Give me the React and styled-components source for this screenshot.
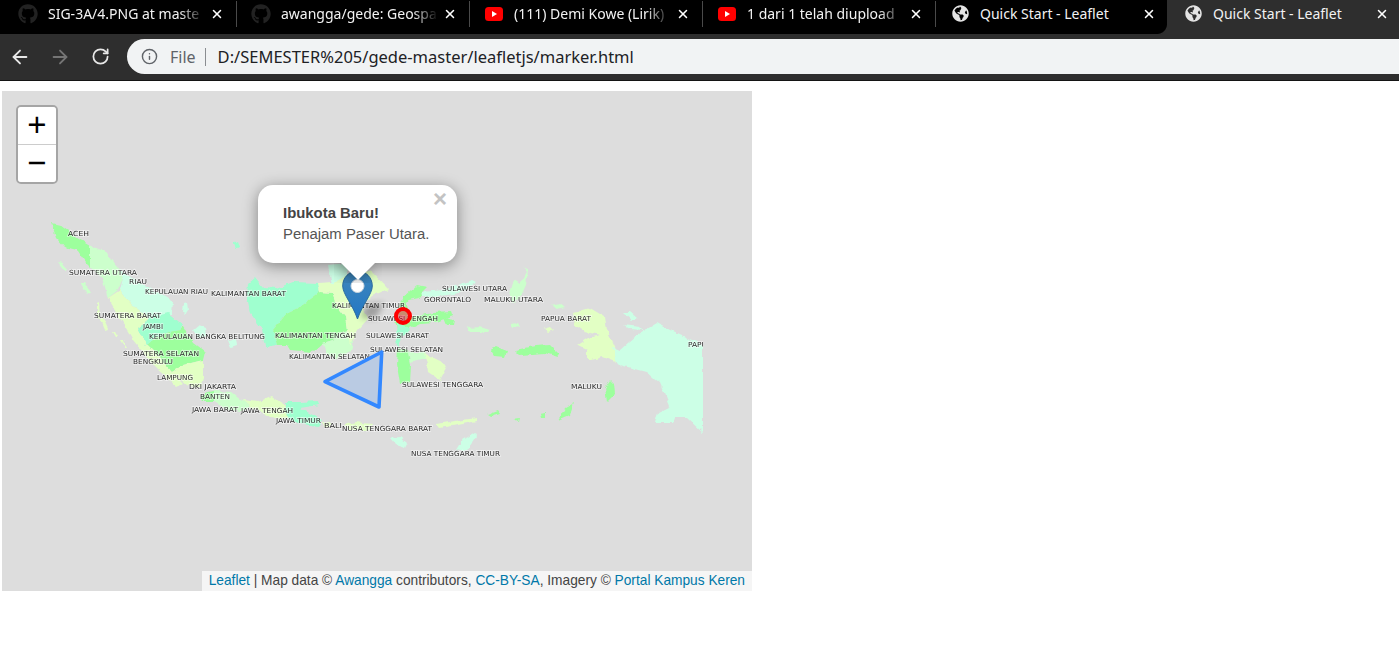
import React from 'react'
import styled, { createGlobalStyle } from 'styled-components'
import { FaGithub, FaGlobeAmericas } from 'react-icons/fa'
import { ArrowLeft, ArrowRight, Info, RotateCw, X } from 'lucide-react'

const BRIGHT = '#9dff9d'
const MINT = '#9fffcf'
const PALE_MINT = '#ccffe6'
const PALE_GREEN = '#ccffcc'
const PALE_YELLOW = '#e2ffc4'

const tabs = [
  { title: 'SIG-3A/4.PNG at maste', icon: 'github', fade: true },
  { title: 'awangga/gede: Geospa', icon: 'github', fade: true },
  { title: '(111) Demi Kowe (Lirik)', icon: 'youtube', fade: true },
  { title: '1 dari 1 telah diupload', icon: 'youtube', fade: true },
  { title: 'Quick Start - Leaflet', icon: 'globe' },
  { title: 'Quick Start - Leaflet', icon: 'globe', active: true },
]

// page coordinates, the svg viewBox starts at the corner of the map
const land = [
  [BRIGHT, '52,223 60,225 73,235 90,245 90,255 90,267 85,262 77,250 65,247 57,238'],
  [PALE_GREEN, '90,245 107,253 120,270 123,278 118,290 108,298 102,278 90,267'],
  [PALE_MINT, '120,270 137,280 153,290 173,302 172,315 150,318 132,305 120,290 123,278'],
  [PALE_YELLOW, '108,298 120,290 132,305 150,318 137,328 147,345 160,358 172,372 183,384 177,387 155,367 133,340 120,318'],
  [MINT, '137,328 150,318 168,313 183,325 180,330 168,332 155,338 147,345'],
  [BRIGHT, '147,345 155,338 168,332 180,330 183,327 193,343 205,352 203,360 183,365 172,372 160,358'],
  [PALE_YELLOW, '183,365 203,360 203,378 200,388 187,385 172,372'],
  [PALE_MINT, '193,330 199,325 206,328 207,337 198,338'],
  [PALE_MINT, '228,340 236,338 237,346 231,348'],
  [PALE_GREEN, '58,262 62,263 68,270 64,270'],
  [PALE_GREEN, '80,282 84,282 90,292 87,294'],
  [PALE_YELLOW, '97,303 99,302 100,318 97,317'],
  [PALE_YELLOW, '100,318 103,318 108,329 105,330'],
  [PALE_YELLOW, '113,332 115,332 118,337 116,337'],
  [PALE_YELLOW, '120,340 122,340 127,348 125,348'],
  [PALE_MINT, '183,303 187,302 188,310 185,315 182,312'],
  [MINT, '233,243 237,241 239,247 235,249'],
  [MINT, '248,283 255,277 263,287 277,288 293,282 318,283 320,292 300,307 287,313 273,330 277,345 265,347 262,330 250,313 247,297'],
  [BRIGHT, '320,292 332,293 337,307 345,317 347,330 333,340 323,343 313,352 290,350 287,345 277,345 273,330 287,313 300,307'],
  [PALE_GREEN, '323,343 333,340 347,330 353,343 350,353 337,358 327,355'],
  [PALE_YELLOW, '318,283 332,282 345,275 370,270 388,289 372,296 362,305 367,320 358,330 350,345 347,330 345,317 337,307 332,293 320,292'],
  [PALE_MINT, '328,265 347,263 347,275 332,284'],
  [BRIGHT, '200,397 207,392 214,391 214,402 203,402'],
  [PALE_GREEN, '214,391 232,392 242,400 250,407 240,412 225,408 214,402'],
  [PALE_YELLOW, '242,400 258,402 272,396 280,402 290,408 287,418 270,417 250,407'],
  [MINT, '285,402 300,402 318,401 319,405 300,408 322,420 318,426 300,424 287,418'],
  [PALE_YELLOW, '323,422 330,423 330,427 324,427'],
  [PALE_YELLOW, '345,425 355,422 372,424 370,430 350,430'],
  [PALE_YELLOW, '437,424 455,421 477,418 477,421 458,425 440,428'],
  [PALE_MINT, '390,438 400,437 407,443 405,447 395,444'],
  [PALE_MINT, '456,450 462,440 475,432 477,436 470,447 462,452'],
  [PALE_MINT, '422,292 443,290 473,280 477,282 460,293 433,297 423,297'],
  [BRIGHT, '403,297 417,285 427,287 422,292 423,297 410,300 403,303'],
  [BRIGHT, '402,298 407,305 410,317 433,313 452,312 453,315 437,322 420,323 410,328 397,330 395,317'],
  [BRIGHT, '443,318 455,320 454,325 446,325'],
  [MINT, '397,322 408,327 410,330 402,337 397,347 396,335'],
  [BRIGHT, '398,347 408,350 410,365 409,383 400,383 397,365'],
  [PALE_GREEN, '408,352 424,352 426,358 410,362'],
  [PALE_YELLOW, '423,353 437,360 448,365 440,380 428,372 427,363'],
  [PALE_GREEN, '467,328 480,327 490,330 488,332 470,332'],
  [PALE_GREEN, '510,295 514,280 520,284 527,272 523,267 528,270 526,285 520,298 512,302'],
  [PALE_GREEN, '510,323 518,322 520,326 512,327'],
  [BRIGHT, '490,350 497,347 507,351 505,357 494,356'],
  [BRIGHT, '515,350 535,346 550,345 557,352 558,357 545,353 520,355'],
  [BRIGHT, '605,388 610,380 614,384 615,394 607,402'],
  [BRIGHT, '558,420 565,408 574,403 570,415'],
  [BRIGHT, '540,414 545,413 545,418 541,418'],
  [BRIGHT, '487,415 498,411 500,414 490,417'],
  [BRIGHT, '513,419 520,418 519,422'],
  [PALE_YELLOW, '573,313 590,308 605,317 607,330 612,340 620,357 615,362 602,357 592,360 587,360 587,350 577,345 588,338 600,335 585,332 575,325'],
  [PALE_MINT, '613,347 620,350 637,335 657,323 670,330 703,345 703,433 687,418 675,418 673,423 655,423 658,413 670,407 660,383 647,372 620,365 617,362'],
  [PALE_MINT, '623,312 630,312 637,318 632,320'],
  [PALE_MINT, '623,325 640,327 643,330 630,329'],
  [PALE_YELLOW, '543,329 550,327 553,330 547,332'],
  [PALE_GREEN, '550,305 560,303 565,307 556,309'],
]

const labels = [
  ['ACEH', 68, 234, 21],
  ['SUMATERA UTARA', 69, 273, 68],
  ['RIAU', 129, 282, 18],
  ['KEPULAUAN RIAU', 145, 292, 63],
  ['KALIMANTAN BARAT', 211, 294, 75],
  ['SUMATERA BARAT', 94, 316, 67],
  ['JAMBI', 143, 327, 20],
  ['KEPULAUAN BANGKA BELITUNG', 149, 337, 116],
  ['KALIMANTAN TENGAH', 275, 336, 81],
  ['SUMATERA SELATAN', 123, 354, 76],
  ['BENGKULU', 133, 362, 40],
  ['LAMPUNG', 157, 378, 36],
  ['DKI JAKARTA', 189, 387, 47],
  ['BANTEN', 200, 397, 30],
  ['JAWA BARAT', 192, 410, 46],
  ['JAWA TENGAH', 241, 411, 52],
  ['JAWA TIMUR', 276, 421, 45],
  ['BALI', 324, 426, 18],
  ['NUSA TENGGARA BARAT', 342, 429, 90],
  ['NUSA TENGGARA TIMUR', 411, 454, 89],
  ['KALIMANTAN SELATAN', 289, 357, 81],
  ['KALIMANTAN TIMUR', 332, 306, 73],
  ['SULAWESI TENGAH', 368, 319, 70],
  ['SULAWESI BARAT', 366, 336, 63],
  ['SULAWESI SELATAN', 370, 350, 73],
  ['SULAWESI TENGGARA', 402, 385, 81],
  ['SULAWESI UTARA', 442, 289, 65],
  ['GORONTALO', 424, 300, 47],
  ['MALUKU UTARA', 484, 300, 59],
  ['PAPUA BARAT', 541, 319, 50],
  ['MALUKU', 571, 387, 31],
  ['PAPUA', 688, 345, 24],
]

const GlobalStyle = createGlobalStyle`
  html, body {
    margin: 0;
    padding: 0;
    background: #fff;
    overflow: hidden;
  }
`

const Window = styled.div`
  width: 1399px;
  height: 665px;
  overflow: hidden;
  display: flex;
  flex-direction: column;
  font-family: "Noto Sans", "Open Sans", sans-serif;
`

const TabStrip = styled.div`
  display: flex;
  height: 34px;
  padding-left: 2px;
  background: #000;
`

const Tab = styled.div`
  position: relative;
  flex: 0 0 233px;
  min-width: 0;
  box-sizing: border-box;
  display: flex;
  align-items: center;
  padding: 0 11px 7px 17px;
  background: ${(p) => (p.$active ? '#2e2e2e' : 'transparent')};
  color: #f2f2f2;

  &::before {
    content: '';
    display: ${(p) => (p.$active ? 'block' : 'none')};
    position: absolute;
    left: -10px;
    bottom: 0;
    width: 10px;
    height: 10px;
    background: radial-gradient(circle at 0 0, #000 9.5px, #2e2e2e 10.5px);
  }

  &::after {
    content: '';
    display: ${(p) => (p.$divider ? 'block' : 'none')};
    position: absolute;
    right: -2px;
    top: 1px;
    bottom: 7px;
    width: 1px;
    background: #4a4a4a;
  }
`

const TabIcon = styled.span`
  flex: 0 0 18px;
  min-width: 0;
  height: 18px;
  margin-right: 11px;
  display: flex;
  align-items: center;
  justify-content: center;
  color: ${(p) => p.$color};

  svg {
    flex-shrink: 0;
  }
`

const TabTitle = styled.span`
  flex: 1;
  min-width: 0;
  font-size: 14px;
  white-space: nowrap;
  mask-image: ${(p) => (p.$fade ? 'linear-gradient(to right, #000 84%, transparent 100%)' : 'none')};
`

const TabClose = styled.span`
  flex: 0 0 14px;
  margin-left: 5px;
  display: flex;
  color: #fff;
`

const Toolbar = styled.div`
  display: flex;
  align-items: flex-start;
  height: 41px;
  padding-top: 5px;
  background: #2e2e2e;
  border-bottom: 1px solid #141414;
`

const NavButton = styled.span`
  flex: 0 0 40px;
  height: 35px;
  display: flex;
  align-items: center;
  justify-content: center;
  color: ${(p) => (p.$disabled ? '#757575' : '#e8e8e8')};
`

const AddressBar = styled.div`
  flex: 1;
  height: 35px;
  margin-left: 7px;
  padding-left: 14px;
  display: flex;
  align-items: center;
  background: #f1f3f4;
  border-radius: 18px 0 0 18px;
`

const SiteInfo = styled.span`
  display: flex;
  align-items: center;
  gap: 12px;
  padding-right: 9px;
  margin-right: 12px;
  color: #5f6368;
  font-size: 16px;
  border-right: 1px solid #8a8d91;
  line-height: 18px;
`

const Url = styled.span`
  color: #202124;
  font-size: 16.5px;
`

const Page = styled.div`
  flex: 1;
  background: #fff;
  padding: 10px 2px;
`

const MapFrame = styled.div`
  position: relative;
  width: 750px;
  height: 500px;
  background: #ddd;
  overflow: hidden;
  font-family: "Liberation Sans", Arial, sans-serif;
`

const MapDrawing = styled.svg`
  display: block;
  width: 750px;
  height: 500px;
`

const LabelText = styled.text`
  font-family: "DejaVu Sans", sans-serif;
  font-size: 7px;
  fill: #2a2a2a;
  stroke: rgba(255, 255, 255, 0.5);
  stroke-width: 1.6px;
  paint-order: stroke;
  dominant-baseline: central;
`

const ZoomBox = styled.div`
  position: absolute;
  left: 14px;
  top: 14px;
  width: 38px;
  border: 2px solid rgba(0, 0, 0, 0.25);
  border-radius: 5px;
  background-clip: padding-box;
  overflow: hidden;
`

const ZoomButton = styled.div`
  box-sizing: border-box;
  height: 37px;
  padding-top: 4px;
  display: flex;
  align-items: center;
  justify-content: center;
  background: #fff;
  color: #000;
  font: 33px "Liberation Mono", monospace;
  & + & {
    height: 38px;
    border-top: 1px solid #ccc;
  }
`

const Popup = styled.div`
  position: absolute;
  left: 256px;
  top: 94px;
  width: 199px;
  height: 78px;
  box-sizing: border-box;
  padding: 18px 25px;
  background: #fff;
  border-radius: 15px;
  box-shadow: 0 3px 15px rgba(0, 0, 0, 0.4);
  color: #555;
  font-size: 14.9px;
  line-height: 21px;
  white-space: nowrap;
`

const PopupTitle = styled.b`
  color: #444;
`

const PopupClose = styled.span`
  position: absolute;
  right: 10px;
  top: 2px;
  color: #c3c3c3;
  font: bold 24px/24px "Liberation Sans", sans-serif;
`

const PopupTipClip = styled.div`
  position: absolute;
  left: 50%;
  top: 100%;
  width: 48px;
  height: 20px;
  margin-left: -24px;
  overflow: hidden;
`

const PopupTip = styled.div`
  width: 24px;
  height: 24px;
  margin: -12px auto 0;
  background: #fff;
  transform: rotate(45deg);
  box-shadow: 0 3px 15px rgba(0, 0, 0, 0.4);
`

const Pin = styled.svg`
  position: absolute;
  left: 340px;
  top: 179px;
  width: 31px;
  height: 50px;
`

const Attribution = styled.div`
  position: absolute;
  right: 0;
  bottom: 0;
  height: 20px;
  padding: 0 7px;
  background: rgba(255, 255, 255, 0.7);
  color: #444;
  font-size: 13.72px;
  line-height: 19px;
  white-space: nowrap;
`

const MapLink = styled.a`
  color: #0078a8;
  text-decoration: none;
`

const YoutubeIcon = () => (
  <svg width='18' height='14' viewBox='0 0 18 14'>
    <rect width='18' height='14' rx='3.5' fill='#f00' />
    <path d='M7 4l5 3-5 3z' fill='#fff' />
  </svg>
)

const TabFavicon = ({ icon }) => {
  if (icon === 'github') return <TabIcon $color='#222'><FaGithub size={20} /></TabIcon>
  if (icon === 'youtube') return <TabIcon><YoutubeIcon /></TabIcon>
  return <TabIcon $color='#e4e4e4'><FaGlobeAmericas size={17} /></TabIcon>
}

const IndonesiaMap = () => (
  <MapDrawing viewBox='2 91 750 500'>
    <defs>
      {/* rough coastlines, the tiles are low resolution */}
      <filter id='coast' x='-5%' y='-5%' width='110%' height='110%'>
        <feTurbulence type='fractalNoise' baseFrequency='0.14' numOctaves='2' seed='4' />
        <feDisplacementMap in='SourceGraphic' scale='5' xChannelSelector='R' yChannelSelector='G' />
        <feGaussianBlur stdDeviation='0.5' />
      </filter>
      <filter id='soft' x='-5%' y='-5%' width='110%' height='110%'>
        <feGaussianBlur stdDeviation='0.35' />
      </filter>
      <filter id='shadow' x='-50%' y='-50%' width='200%' height='200%'>
        <feGaussianBlur stdDeviation='3' />
      </filter>
      <clipPath id='tile'>
        <rect x='2' y='91' width='701' height='500' />
      </clipPath>
    </defs>
    <g clipPath='url(#tile)'>
      <g filter='url(#coast)'>
        {land.map(([color, points]) => (
          <polygon key={points} points={points} fill={color} />
        ))}
      </g>
      <g filter='url(#soft)'>
        {labels.map(([text, x, y, width]) => (
          <LabelText key={text} x={x} y={y} textLength={width} lengthAdjust='spacingAndGlyphs'>
            {text}
          </LabelText>
        ))}
      </g>
    </g>
    <polygon points='360,318 367,304 384,303 376,318' fill='#000' opacity='0.28' filter='url(#shadow)' />
    <polygon
      points='381.7,352 325,381.7 379,407'
      fill='#3388ff'
      fillOpacity='0.2'
      stroke='#3388ff'
      strokeWidth='3.6'
      strokeLinejoin='round'
    />
    <circle cx='403' cy='316' r='7' fill='#f03' fillOpacity='0.45' stroke='#f00' strokeWidth='4' />
  </MapDrawing>
)

const App = () => (
  <Window>
    <GlobalStyle />
    <TabStrip>
      {tabs.map((tab, i) => (
        <Tab key={i} $active={tab.active} $divider={i < 4}>
          <TabFavicon icon={tab.icon} />
          <TabTitle $fade={tab.fade}>{tab.title}</TabTitle>
          <TabClose><X size={14} strokeWidth={2.6} /></TabClose>
        </Tab>
      ))}
    </TabStrip>
    <Toolbar>
      <NavButton><ArrowLeft size={22} strokeWidth={2} /></NavButton>
      <NavButton $disabled><ArrowRight size={22} strokeWidth={2} /></NavButton>
      <NavButton><RotateCw size={19} strokeWidth={2.2} /></NavButton>
      <AddressBar>
        <SiteInfo>
          <Info size={17} strokeWidth={2} />
          File
        </SiteInfo>
        <Url>D:/SEMESTER%205/gede-master/leafletjs/marker.html</Url>
      </AddressBar>
    </Toolbar>
    <Page>
      <MapFrame>
        <IndonesiaMap />
        <ZoomBox>
          <ZoomButton>+</ZoomButton>
          <ZoomButton>−</ZoomButton>
        </ZoomBox>
        <Pin viewBox='0 0 31 50'>
          <defs>
            <linearGradient id='pinFill' x1='0' y1='0' x2='0' y2='1'>
              <stop offset='0' stopColor='#3f87ba' />
              <stop offset='1' stopColor='#2377c6' />
            </linearGradient>
          </defs>
          <path
            d='M15.500 1C7 1 .7 7.600.7 16c0 8 10.200 19 14.800 33 4.600-14 14.800-25 14.800-33C30.300 7.600 24 1 15.500 1z'
            fill='url(#pinFill)'
            stroke='#2b6c9f'
          />
          <circle cx='15.500' cy='16' r='6.500' fill='#fff' stroke='#cfd8df' />
        </Pin>
        <Popup>
          <PopupClose>×</PopupClose>
          <PopupTitle>Ibukota Baru!</PopupTitle>
          <br />
          Penajam Paser Utara.
          <PopupTipClip>
            <PopupTip />
          </PopupTipClip>
        </Popup>
        <Attribution>
          <MapLink>Leaflet</MapLink> | Map data © <MapLink>Awangga</MapLink> contributors,{' '}
          <MapLink>CC-BY-SA</MapLink>, Imagery © <MapLink>Portal Kampus Keren</MapLink>
        </Attribution>
      </MapFrame>
    </Page>
  </Window>
)

export default App
